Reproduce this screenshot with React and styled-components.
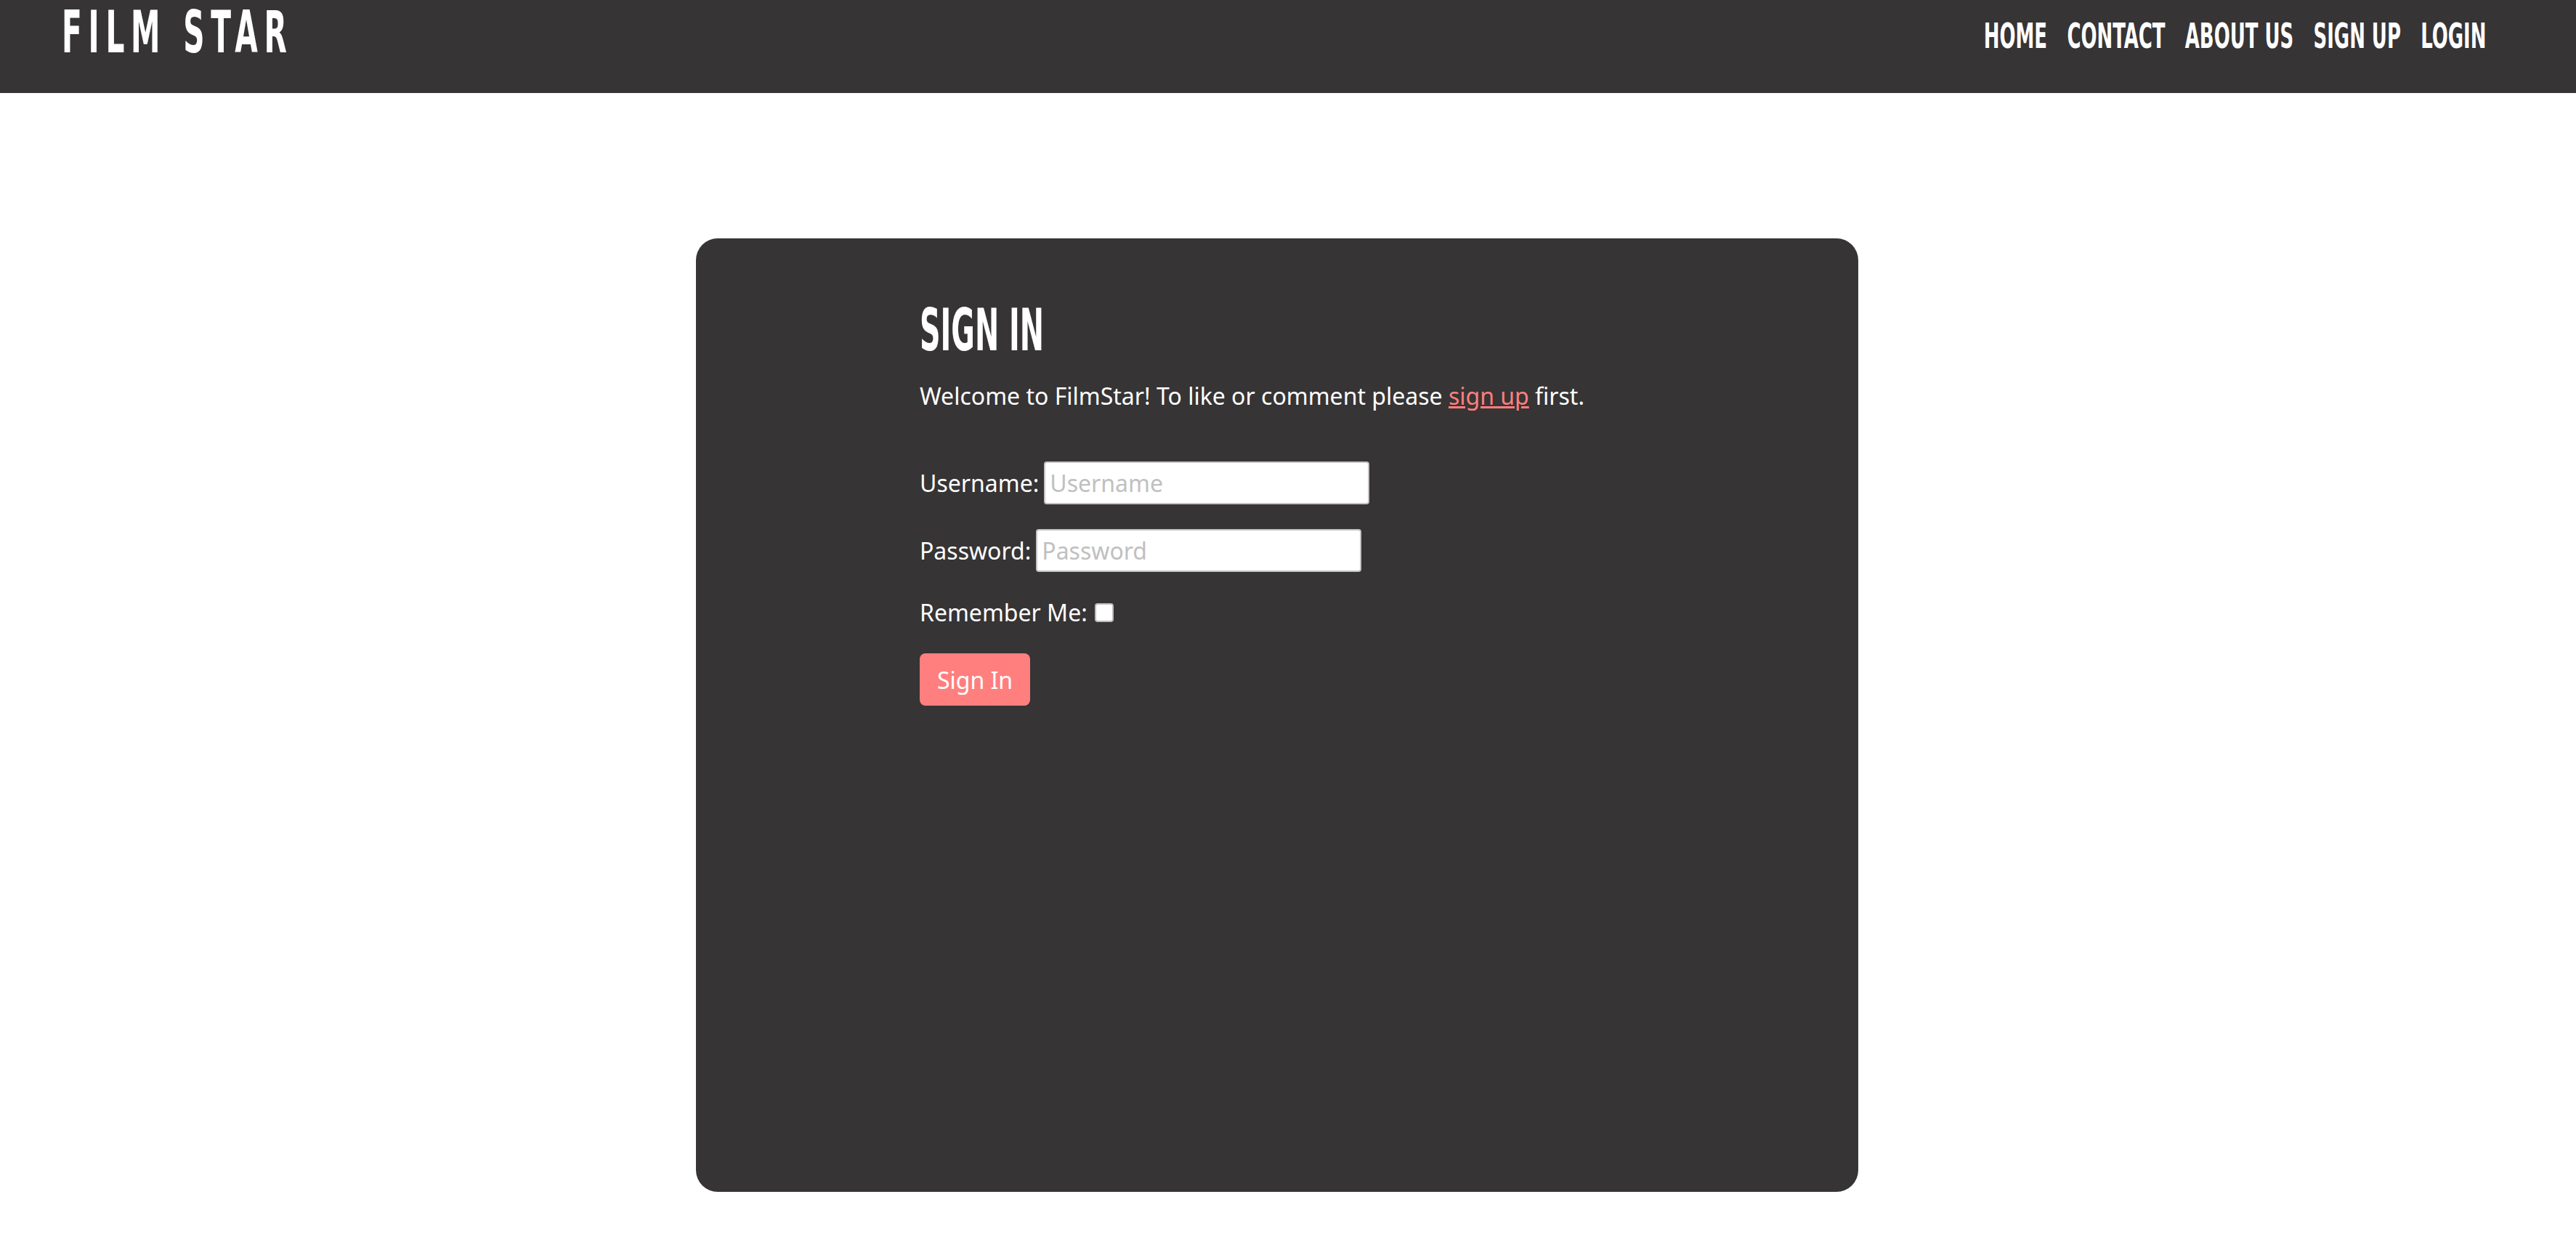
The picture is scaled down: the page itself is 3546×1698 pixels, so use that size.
import React from 'react';
import styled, { createGlobalStyle } from 'styled-components';

const links = [
  { id: 1, text: 'HOME', url: '#' },
  { id: 2, text: 'CONTACT', url: '#' },
  { id: 3, text: 'ABOUT US', url: '#' },
  { id: 4, text: 'SIGN UP', url: '#' },
  { id: 5, text: 'LOGIN', url: '#' },
];

const GlobalStyle = createGlobalStyle`
  html, body {
    margin: 0;
    padding: 0;
    background: #ffffff;
    font-family: 'Noto Sans', 'Open Sans', sans-serif;
  }
  * {
    box-sizing: border-box;
  }
`;

// condensed display face, squeezed further to get close to a Bebas look
const display = `'Liberation Sans Narrow', 'DejaVu Sans Condensed', 'Liberation Sans', sans-serif`;

const App = () => {
  return (
    <>
      <GlobalStyle />
      <Header>
        <Logo>FILM STAR</Logo>
        <Nav>
          {links.map((link) => (
            <NavLink key={link.id} href={link.url}>
              {link.text}
            </NavLink>
          ))}
        </Nav>
      </Header>
      <Main>
        <Card>
          <Form onSubmit={(e) => e.preventDefault()}>
            <Title>SIGN IN</Title>
            <Intro>
              Welcome to FilmStar! To like or comment please <a href='#'>sign up</a> first.
            </Intro>
            <Fields>
              <Row>
                <label htmlFor='username'>Username:</label>
                <Input id='username' type='text' placeholder='Username' />
              </Row>
              <Row>
                <label htmlFor='password'>Password:</label>
                <Input id='password' type='password' placeholder='Password' />
              </Row>
              <Row $gap={10}>
                <label htmlFor='remember'>Remember Me:</label>
                <Checkbox id='remember' type='checkbox' />
              </Row>
              <Button type='submit'>Sign In</Button>
            </Fields>
          </Form>
        </Card>
      </Main>
    </>
  );
};

export default App;

const Header = styled.header`
  display: flex;
  justify-content: space-between;
  align-items: flex-start;
  height: 128px;
  padding: 0 124px 0 85px;
  background: #363435;
`;

const Logo = styled.h2`
  margin: 5px 0 0;
  font-family: ${display};
  font-weight: 700;
  font-size: 80px;
  line-height: 1;
  letter-spacing: 15.5px;
  color: #ffffff;
  white-space: nowrap;
  transform: scaleX(0.565);
  transform-origin: left center;
`;

const Nav = styled.nav`
  display: flex;
  gap: 45px;
  margin-top: 26px;
  transform: scaleX(0.607);
  transform-origin: right center;
`;

const NavLink = styled.a`
  font-family: ${display};
  font-weight: 700;
  font-size: 47.5px;
  line-height: 1;
  color: #ffffff;
  text-decoration: none;
  white-space: nowrap;
`;

const Main = styled.main`
  display: flex;
  justify-content: center;
  padding: 200px 30px 0 0;
`;

const Card = styled.section`
  width: 1600px;
  height: 1312px;
  padding: 86px 0 0 308px;
  background: #363435;
  border-radius: 30px;
  color: #ffffff;
`;

const Form = styled.form`
  display: flex;
  flex-direction: column;
  font-size: 32px;
  line-height: 44px;
`;

const Title = styled.h1`
  margin: 0;
  font-family: ${display};
  font-weight: 700;
  font-size: 81px;
  line-height: 1;
  color: #ffffff;
  transform: scaleX(0.545);
  transform-origin: left center;
`;

const Intro = styled.p`
  margin: 28px 0 0;
  a {
    color: #ff7f7f;
    text-decoration: underline;
  }
`;

const Fields = styled.div`
  display: flex;
  flex-direction: column;
  align-items: flex-start;
  gap: 34px;
  margin-top: 68px;
`;

const Row = styled.div`
  display: flex;
  align-items: center;
  gap: ${(p) => p.$gap || 7}px;
`;

const Input = styled.input`
  width: 448px;
  height: 59px;
  padding: 0 6px;
  border: 2px solid #c4c4c4;
  border-radius: 4px;
  background: #ffffff;
  font-family: inherit;
  font-size: 32px;
  color: #333333;
  &::placeholder {
    color: #c0c0c0;
  }
`;

const Checkbox = styled.input`
  appearance: none;
  width: 26px;
  height: 26px;
  margin: 0;
  border: 2px solid #bdbdbd;
  border-radius: 4px;
  background: #ffffff;
`;

const Button = styled.button`
  width: 152px;
  height: 72px;
  border: none;
  border-radius: 8px;
  background: #ff7f7f;
  color: #ffffff;
  font-family: inherit;
  font-size: 32px;
  cursor: pointer;
`;
